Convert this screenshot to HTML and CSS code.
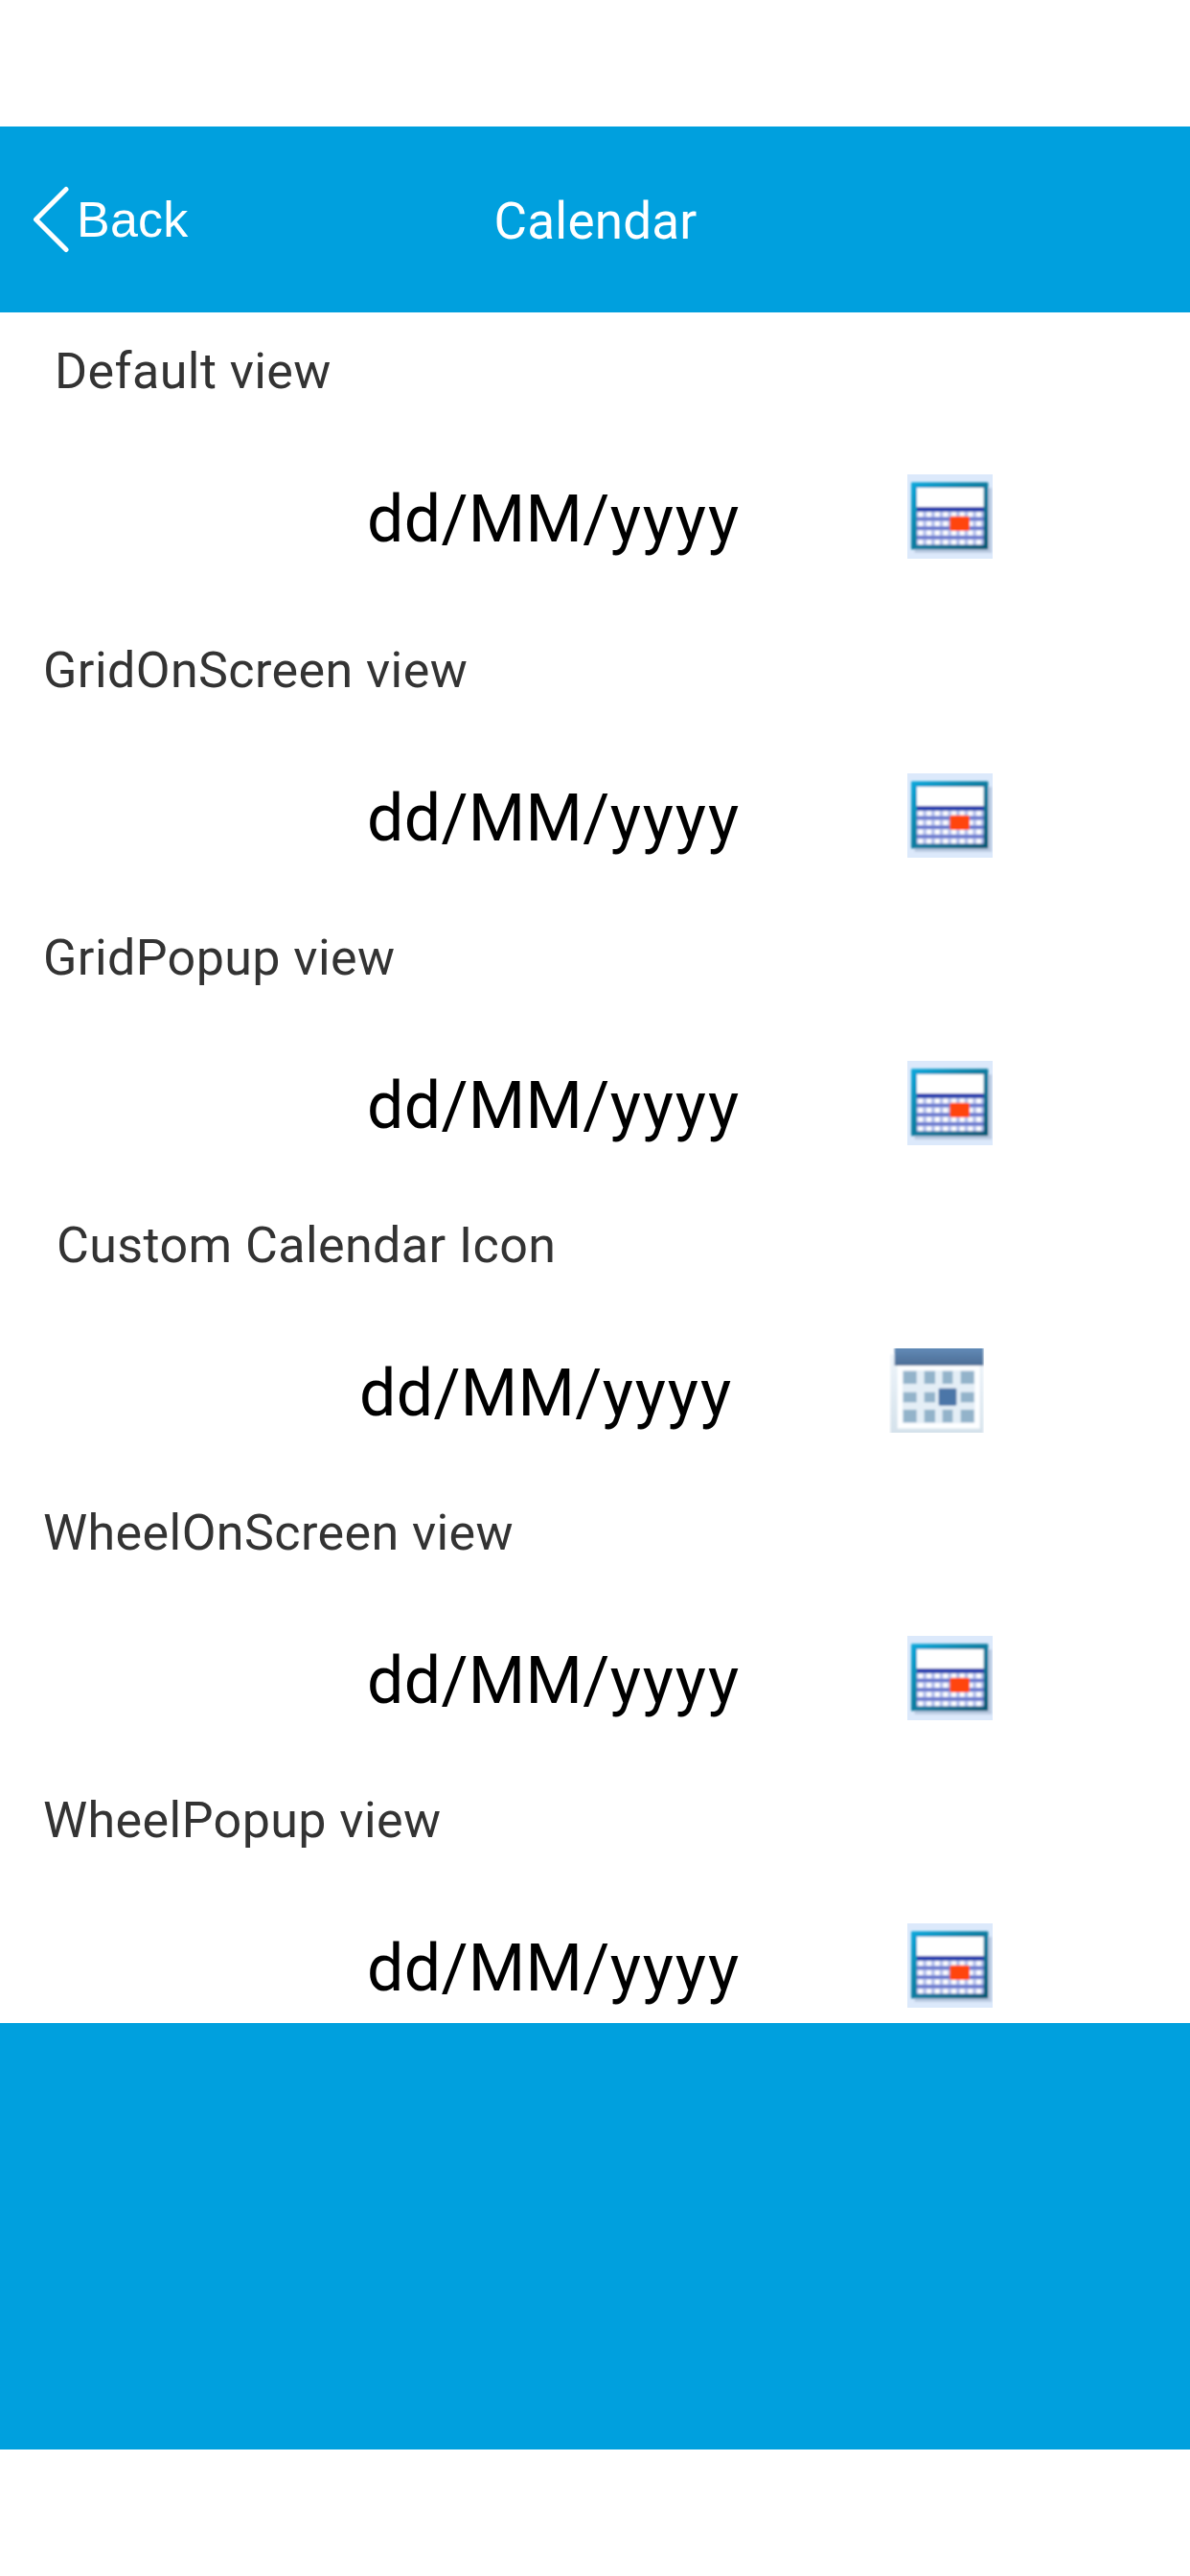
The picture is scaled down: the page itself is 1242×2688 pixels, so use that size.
FILE: index.html
```html
<!DOCTYPE html>
<html lang="en">
<head>
<meta charset="utf-8">
<title>Calendar</title>
<link rel="stylesheet" href="styles.css">
</head>
<body>
<svg class="defs" aria-hidden="true">
  <defs>
    <linearGradient id="frame" x1="0" y1="0" x2="1" y2="1">
      <stop offset="0" stop-color="#10a8dc"/><stop offset=".35" stop-color="#1088ae"/><stop offset="1" stop-color="#005570"/>
    </linearGradient>
    <linearGradient id="bar" x1="0" y1="0" x2="0" y2="1">
      <stop offset="0" stop-color="#6690bd"/><stop offset="1" stop-color="#4c6d95"/>
    </linearGradient>
    <linearGradient id="body" x1="0" y1="0" x2="0" y2="1">
      <stop offset="0" stop-color="#eef5fb"/><stop offset="1" stop-color="#d3e0ea"/>
    </linearGradient>
    <pattern id="days" x="80" y="161" width="26" height="29" patternUnits="userSpaceOnUse">
      <rect width="26" height="29" fill="#b4c0ee"/>
      <rect x="5" y="2" width="15" height="15" fill="#fff"/>
      <rect y="18" width="26" height="11" fill="#6676cc"/>
    </pattern>
    <filter id="soft" x="-10%" y="-10%" width="120%" height="120%"><feGaussianBlur stdDeviation="3.2"/></filter>
    <symbol id="calendar" viewBox="51 45 267 264">
      <rect x="51" y="45" width="267" height="264" fill="#dce9fb"/>
      <g filter="url(#soft)">
        <path d="M74 285H310V88" fill="none" stroke="#b9c8df" stroke-width="10"/>
        <rect x="63" y="70" width="241" height="210" rx="2" fill="url(#frame)"/>
        <rect x="81" y="87" width="209" height="62" fill="#fff"/>
        <rect x="81" y="161" width="209" height="105" fill="url(#days)"/>
        <rect x="81" y="147" width="209" height="14" fill="#2c3cae"/>
        <rect x="184" y="176" width="62" height="46" rx="6" fill="#ff450f"/>
      </g>
    </symbol>
    <symbol id="custom" viewBox="54 51 297 264">
      <g filter="url(#soft)">
        <path d="M58 70H349V330H58Z" fill="url(#body)"/>
        <path d="M80 104H338V302H80Z" fill="#fdfeff"/>
        <path d="M96 120H322V285H96Z" fill="#e4eef6"/>
        <path d="M71 40H349V105H71Z" fill="url(#bar)"/>
        <path d="M98 122h42v40h-42zM164 122h34v40h-34zM221 122h32v40h-32zM278 122h42v40h-42zM98 188h42v32h-42zM164 188h34v32h-34zM278 188h42v32h-42zM98 243h42v40h-42zM164 243h34v40h-34zM221 243h32v40h-32zM278 243h42v40h-42z" fill="#93b3ca"/>
        <rect x="209" y="176" width="56" height="54" rx="4" fill="#4b76a8"/>
      </g>
    </symbol>
  </defs>
</svg>

<main class="screen">
  <header class="navbar">
    <a class="back">
      <svg class="chevron" viewBox="0 0 40 72"><path d="M35 4.500 3.500 36 35 67.500"/></svg>
      <span>Back</span>
    </a>
    <h1 class="title">Calendar</h1>
  </header>

  <div class="list">
    <section class="item item-first">
      <h2 class="label">Default view</h2>
      <div class="field"><span class="date">dd/MM/<span class="year">yyyy</span></span><svg class="icon"><use href="#calendar"/></svg></div>
    </section>
    <section class="item">
      <h2 class="label">GridOnScreen view</h2>
      <div class="field"><span class="date">dd/MM/<span class="year">yyyy</span></span><svg class="icon"><use href="#calendar"/></svg></div>
    </section>
    <section class="item">
      <h2 class="label">GridPopup view</h2>
      <div class="field"><span class="date">dd/MM/<span class="year">yyyy</span></span><svg class="icon"><use href="#calendar"/></svg></div>
    </section>
    <section class="item item-custom">
      <h2 class="label">Custom Calendar Icon</h2>
      <div class="field"><span class="date">dd/MM/<span class="year">yyyy</span></span><svg class="icon icon-custom"><use href="#custom"/></svg></div>
    </section>
    <section class="item">
      <h2 class="label">WheelOnScreen view</h2>
      <div class="field"><span class="date">dd/MM/<span class="year">yyyy</span></span><svg class="icon"><use href="#calendar"/></svg></div>
    </section>
    <section class="item">
      <h2 class="label">WheelPopup view</h2>
      <div class="field"><span class="date">dd/MM/<span class="year">yyyy</span></span><svg class="icon"><use href="#calendar"/></svg></div>
    </section>
  </div>

  <footer class="panel"></footer>
</main>
</body>
</html>
```
FILE: styles.css
```css
* { box-sizing: border-box; }

body {
  margin: 0;
  background: #fff;
  font-family: Roboto, sans-serif;
}

.defs { display: block; width: 0; height: 0; }

.screen {
  display: flex;
  flex-direction: column;
  width: 1242px;
  height: 2688px;
  padding: 132px 0;
}

.navbar {
  display: grid;
  grid-template-columns: 1fr auto 1fr;
  align-items: center;
  height: 194px;
  background: #00a0de;
  color: #fff;
}

.back {
  display: flex;
  align-items: center;
  gap: 6px;
  padding-left: 34px;
  font: 52px/60px "Liberation Sans", sans-serif;
  letter-spacing: .2px;
}

.chevron {
  width: 40px;
  height: 72px;
  fill: none;
  stroke: #fff;
  stroke-width: 5;
  stroke-linecap: round;
  stroke-linejoin: round;
}

.title {
  margin: 3px 0 0 1px;
  font-size: 53px;
  line-height: 62px;
  font-weight: 400;
  letter-spacing: .2px;
}

.list {
  height: 1785px;
  overflow: hidden;
  color: #333;
}

.item { height: 300px; padding-top: 31px; }
.item-first { height: 312px; }

.label {
  margin: 0;
  padding-left: 45px;
  font-size: 52px;
  line-height: 61px;
  font-weight: 400;
  letter-spacing: .42px;
}
.item-first .label { padding-left: 57px; }
.item-custom .label { padding-left: 59px; }

.field {
  display: flex;
  height: 88px;
  margin-top: 77px;
  padding-left: 383px;
}
.item-custom .field { padding-left: 375px; }

.date {
  width: 564px;
  padding-top: 3px;
  color: #000;
  font-size: 68px;
  line-height: 88px;
  letter-spacing: .35px;
}
.item-custom .date { width: 553px; }
.year { letter-spacing: 1.9px; }

.icon { width: 89px; height: 88px; }
.icon-custom { width: 99px; }

.panel {
  height: 445px;
  background: #00a0de;
}
```
